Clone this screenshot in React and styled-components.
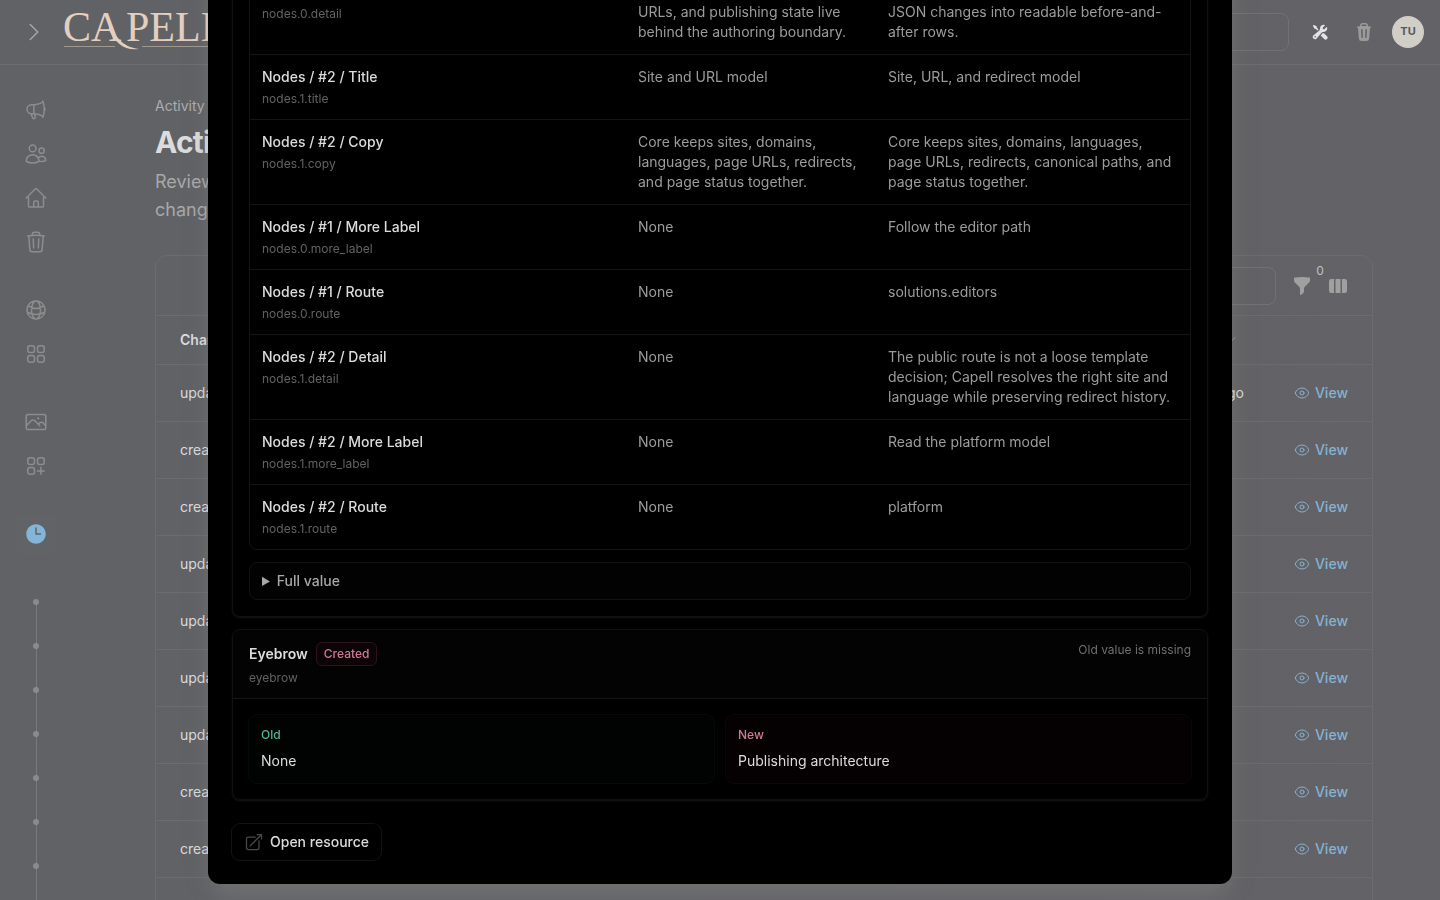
import React from 'react'
import styled, { createGlobalStyle } from 'styled-components'
import {
    HiOutlineMegaphone, HiOutlineUsers, HiOutlineHome, HiOutlineTrash, HiOutlineGlobeAlt,
    HiOutlineSquares2X2, HiOutlinePhoto, HiOutlineSquaresPlus, HiClock, HiOutlineChevronRight,
    HiOutlineEye, HiOutlineArrowTopRightOnSquare, HiMiniWrenchScrewdriver, HiMiniTrash,
    HiMiniFunnel, HiMiniViewColumns, HiOutlineChevronDown
} from 'react-icons/hi2'

const navGroups = [
    [
        { label: 'Announcements', Icon: HiOutlineMegaphone },
        { label: 'Users', Icon: HiOutlineUsers },
        { label: 'Home', Icon: HiOutlineHome },
        { label: 'Trash', Icon: HiOutlineTrash }
    ],
    [
        { label: 'Sites', Icon: HiOutlineGlobeAlt },
        { label: 'Pages', Icon: HiOutlineSquares2X2 }
    ],
    [
        { label: 'Media', Icon: HiOutlinePhoto },
        { label: 'Extensions', Icon: HiOutlineSquaresPlus }
    ],
    [
        { label: 'Activity', Icon: HiClock, active: true }
    ]
]

const activity = [
    ['updated', 'ago'], ['created', ''], ['created', ''], ['updated', ''], ['updated', ''],
    ['updated', ''], ['updated', ''], ['created', ''], ['created', ''], ['created', '']
]

const changes = [
    ['Nodes / #2 / Title', 'nodes.1.title', 'Site and URL model', 'Site, URL, and redirect model'],
    ['Nodes / #2 / Copy', 'nodes.1.copy', 'Core keeps sites, domains, languages, page URLs, redirects, and page status together.', 'Core keeps sites, domains, languages, page URLs, redirects, canonical paths, and page status together.'],
    ['Nodes / #1 / More Label', 'nodes.0.more_label', 'None', 'Follow the editor path'],
    ['Nodes / #1 / Route', 'nodes.0.route', 'None', 'solutions.editors'],
    ['Nodes / #2 / Detail', 'nodes.1.detail', 'None', 'The public route is not a loose template decision; Capell resolves the right site and language while preserving redirect history.'],
    ['Nodes / #2 / More Label', 'nodes.1.more_label', 'None', 'Read the platform model'],
    ['Nodes / #2 / Route', 'nodes.1.route', 'None', 'platform']
]

function Logo() {
    return (
        <LogoSvg viewBox="0 0 190 44" role="img" aria-label="Capell">
            <text x="-1" y="31">C</text>
            <text x="27" y="31">A</text>
            <text x="62" y="31">PELL</text>
            <path className="swoosh" d="M45 10C50 26 58 37 75 39C61 41 52 34 45 20Z" />
            <path className="rule" d="M0 36.5H51M78 36.5H190" />
        </LogoSvg>
    )
}

function ChangeRow({ title, path, before, after }) {
    return (
        <tr>
            <DiffCell>
                <FieldName>{title}</FieldName>
                <FieldPath>{path}</FieldPath>
            </DiffCell>
            <DiffCell>{before}</DiffCell>
            <DiffCell>{after}</DiffCell>
        </tr>
    )
}

function App() {
    return (
        <>
            <GlobalStyle />
            <Page>
                <Topbar>
                    <IconButton aria-label="Expand sidebar" $color="#a6a6a7"><HiOutlineChevronRight size={24} /></IconButton>
                    <Logo />
                    <SearchInput type="search" aria-label="Search" />
                    <TopActions>
                        <IconButton aria-label="Tools" $color="#e4e4e6"><HiMiniWrenchScrewdriver size={16} /></IconButton>
                        <IconButton aria-label="Trash" $color="#9b9b9c"><HiMiniTrash size={20} /></IconButton>
                    </TopActions>
                    <Avatar>TU</Avatar>
                </Topbar>
                <Body>
                    <Sidebar>
                        {navGroups.map((group, i) => (
                            <NavGroup key={i}>
                                {group.map(({ label, Icon, active }) => (
                                    <NavLink key={label} href="#" aria-label={label} $active={active}>
                                        <Icon size={24} />
                                    </NavLink>
                                ))}
                            </NavGroup>
                        ))}
                        <Timeline>
                            {[0, 1, 2, 3, 4, 5, 6].map(n => <TimelineDot key={n} />)}
                        </Timeline>
                    </Sidebar>
                    <Main>
                        <Crumb href="#">Activity</Crumb>
                        <PageTitle>Activity</PageTitle>
                        <Intro>Review<br />changes</Intro>
                        <TableCard>
                            <TableTools>
                                <SearchInput type="search" aria-label="Search activity" />
                                <FilterButton aria-label="Filter">
                                    <HiMiniFunnel size={20} />
                                    <FilterCount>0</FilterCount>
                                </FilterButton>
                                <IconButton aria-label="Columns" $color="#a0a0a1"><HiMiniViewColumns size={20} /></IconButton>
                            </TableTools>
                            <ActivityTable>
                                <thead>
                                    <tr>
                                        <th>Change</th>
                                        <th><HeadSort><HiOutlineChevronDown size={16} /></HeadSort></th>
                                        <th aria-label="Actions" />
                                    </tr>
                                </thead>
                                <tbody>
                                    {activity.map(([event, date], i) => (
                                        <tr key={i}>
                                            <td>{event}</td>
                                            <td>{date}</td>
                                            <td><ViewLink href="#"><HiOutlineEye size={16} />View</ViewLink></td>
                                        </tr>
                                    ))}
                                </tbody>
                            </ActivityTable>
                        </TableCard>
                    </Main>
                </Body>
            </Page>

            <Modal role="dialog" aria-label="Activity changes">
                <Card>
                    <CardBody $gap="12px">
                        <DiffFrame>
                            <DiffTable>
                                <colgroup>
                                    <DiffCol $width="40%" />
                                    <DiffCol />
                                    <DiffCol $width="314px" />
                                </colgroup>
                                <tbody>
                                    <ChangeRow
                                        title="Nodes / #1 / Detail"
                                        path="nodes.0.detail"
                                        before={<>Pages, layouts, page<br />URLs, and publishing state live behind the authoring boundary.</>}
                                        after={<>Editors review<br />JSON changes into readable before-and-after rows.</>}
                                    />
                                    {changes.map(([title, path, before, after]) => (
                                        <ChangeRow key={path} title={title} path={path} before={before} after={after} />
                                    ))}
                                </tbody>
                            </DiffTable>
                        </DiffFrame>
                        <FullValue>
                            <summary>Full value</summary>
                        </FullValue>
                    </CardBody>
                </Card>
                <Card>
                    <CardHeader>
                        <div>
                            <CardTitle>Eyebrow <Badge>Created</Badge></CardTitle>
                            <FieldPath>eyebrow</FieldPath>
                        </div>
                        <Note>Old value is missing</Note>
                    </CardHeader>
                    <CardBody>
                        <Values>
                            <ValueBox $bg="#000302" $line="#050b09">
                                <ValueLabel $tone="#4fb892">Old</ValueLabel>
                                None
                            </ValueBox>
                            <ValueBox $bg="#050102" $line="#0d0709">
                                <ValueLabel $tone="#d0799a">New</ValueLabel>
                                Publishing architecture
                            </ValueBox>
                        </Values>
                    </CardBody>
                </Card>
                <OpenLink href="#"><HiOutlineArrowTopRightOnSquare size={20} />Open resource</OpenLink>
            </Modal>
        </>
    )
}

export default App

const GlobalStyle = createGlobalStyle`
* {
box-sizing: border-box;
}
body {
margin: 0;
overflow: hidden;
background: #616266;
font-family: Inter, "Liberation Sans", sans-serif;
font-size: 14px;
line-height: 20px;
color: #dcdcde;
}
button, input {
font: inherit;
}
a {
text-decoration: none;
}
`

const Page = styled.div`
height: 100vh;
overflow: hidden;
background: linear-gradient(90deg, #606266, #636266);
`

const Topbar = styled.header`
height: 65px;
display: flex;
align-items: center;
padding: 0 16px 0 22px;
border-bottom: 1px solid #6d6d70;
`

const LogoSvg = styled.svg`
width: 190px;
height: 44px;
margin-left: 18px;
flex: none;

text {
font-family: "Liberation Serif", serif;
font-size: 42px;
fill: #e3cfbf;
}
.swoosh {
fill: #e3cfbf;
}
.rule {
stroke: #a0988f;
stroke-width: 1;
}
`

const IconButton = styled.button`
display: flex;
padding: 0;
border: 0;
background: none;
color: ${props => props.$color};
cursor: pointer;
`

const SearchInput = styled.input`
width: 240px;
height: 38px;
margin-left: auto;
border: 1px solid #727274;
border-radius: 8px;
background: transparent;
`

const TopActions = styled.div`
display: flex;
align-items: center;
gap: 20px;
margin: 0 16px 0 19px;

button {
width: 24px;
justify-content: center;
}
`

const Avatar = styled.div`
width: 32px;
height: 32px;
border-radius: 50%;
background: #d0cec6;
color: #58585a;
font-size: 11px;
font-weight: 700;
line-height: 31px;
text-align: center;
`

const Body = styled.div`
display: flex;
`

const Sidebar = styled.nav`
width: 72px;
flex: none;
padding-top: 25px;
display: flex;
flex-direction: column;
align-items: center;
gap: 28px;
`

const NavGroup = styled.div`
display: flex;
flex-direction: column;
gap: 4px;
`

const NavLink = styled.a`
width: 40px;
height: 40px;
display: flex;
align-items: center;
justify-content: center;
border-radius: 8px;
color: ${props => props.$active ? '#84b4d8' : '#8d8d8d'};
background: ${props => props.$active ? '#616366' : 'transparent'};
`

const Timeline = styled.div`
display: flex;
flex-direction: column;
gap: 38px;
margin-top: 17px;
padding-bottom: 60px;
background: linear-gradient(#7a7a7d, #7a7a7d) center / 1px 100% no-repeat;
`

const TimelineDot = styled.span`
width: 6px;
height: 6px;
border-radius: 50%;
background: #8b8b8f;
`

const Main = styled.main`
flex: 1;
padding: 31px 67px 0 83px;
`

const Crumb = styled.a`
display: block;
color: #acacae;
`

const PageTitle = styled.h1`
margin: 8px 0;
font-size: 30px;
line-height: 36px;
font-weight: 700;
letter-spacing: -0.025em;
`

const Intro = styled.p`
margin: 0;
color: #a8a8aa;
font-size: 18px;
line-height: 28px;
`

const TableCard = styled.section`
margin-top: 31px;
border: 1px solid #6c6c6f;
border-radius: 12px;
`

const TableTools = styled.div`
height: 59px;
display: flex;
align-items: center;
justify-content: flex-end;
gap: 16px;
padding: 0 24px;
`

const FilterButton = styled.button`
position: relative;
display: flex;
padding: 0;
border: 0;
background: none;
color: #a0a0a1;
`

const FilterCount = styled.span`
position: absolute;
left: 20px;
top: -15px;
width: 16px;
height: 20px;
border-radius: 6px;
color: #c0c0c1;
font-size: 12px;
line-height: 20px;
text-align: center;
`

const ActivityTable = styled.table`
width: 100%;
border-collapse: collapse;

th, td {
height: 57px;
padding: 0 24px;
border-top: 1px solid #6c6c6f;
text-align: left;
}
th {
height: 49px;
font-weight: 600;
}
th:last-child, td:last-child {
width: 102px;
padding: 0 24px 0 0;
}
th:nth-child(2), td:nth-child(2) {
width: 134px;
padding-right: 26px;
text-align: right;
white-space: nowrap;
}
`

const HeadSort = styled.span`
display: flex;
justify-content: flex-end;
padding-right: 6px;
color: #98989a;
`

const ViewLink = styled.a`
display: flex;
align-items: center;
justify-content: flex-end;
gap: 5px;
color: #86b2d2;
font-weight: 500;
`

const Modal = styled.div`
position: fixed;
left: 50%;
bottom: 16px;
transform: translateX(-50%);
width: 100%;
max-width: 1024px;
padding: 24px;
display: flex;
flex-direction: column;
gap: 12px;
border-radius: 0 0 12px 12px;
background: #000000;
box-shadow: 0 20px 25px -5px rgba(255, 255, 255, 0.08), 0 0 24px rgba(118, 118, 104, 0.3);
`

const Card = styled.section`
border: 1px solid #111111;
border-radius: 8px;
box-shadow: 0 1px 2px #161616;
`

const CardHeader = styled.header`
display: flex;
justify-content: space-between;
padding: 12px 16px;
border-bottom: 1px solid #151515;
border-radius: 8px 8px 0 0;
background: #030303;
`

const CardTitle = styled.h3`
display: flex;
align-items: center;
gap: 8px;
margin: 0;
font-size: 14px;
line-height: 24px;
font-weight: 600;
`

const Badge = styled.span`
padding: 0 7px;
border: 1px solid #2a151c;
border-radius: 6px;
background: #0d0407;
color: #cf7999;
font-size: 12px;
line-height: 22px;
font-weight: 500;
`

const Note = styled.span`
color: #707072;
font-size: 12px;
line-height: 16px;
`

const CardBody = styled.div`
display: flex;
flex-direction: column;
gap: ${props => props.$gap || 0};
padding: 16px;
`

const DiffFrame = styled.div`
border: 1px solid #141414;
border-radius: 8px;
`

const DiffTable = styled.table`
width: 100%;
table-layout: fixed;
border-collapse: collapse;

tr + tr {
border-top: 1px solid #151515;
}
`

const DiffCol = styled.col`
width: ${props => props.$width || 'auto'};
`

const DiffCell = styled.td`
padding: 12px;
vertical-align: top;
color: #9c9c9e;
`

const FieldName = styled.div`
color: #dcdcde;
font-weight: 500;
`

const FieldPath = styled.div`
margin-top: 4px;
color: #626264;
font-size: 12px;
line-height: 16px;
`

const FullValue = styled.details`
padding: 8px 12px;
border: 1px solid #121212;
border-radius: 8px;
background: #020202;
color: #a8a8aa;
font-weight: 500;
`

const Values = styled.div`
display: grid;
grid-template-columns: 1fr 1fr;
gap: 12px;
`

const ValueBox = styled.div`
padding: 12px;
border-radius: 8px;
background: ${props => props.$bg};
box-shadow: 0 0 0 1px ${props => props.$line};
`

const ValueLabel = styled.div`
margin-bottom: 8px;
color: ${props => props.$tone};
font-size: 12px;
line-height: 16px;
font-weight: 500;
`

const OpenLink = styled.a`
align-self: flex-start;
display: flex;
align-items: center;
gap: 6px;
margin-top: 12px;
padding: 8px 12px;
border-radius: 8px;
box-shadow: 0 0 0 1px #121212;
color: #dcdcde;
font-weight: 500;

svg {
color: #4a4a4c;
}
`
